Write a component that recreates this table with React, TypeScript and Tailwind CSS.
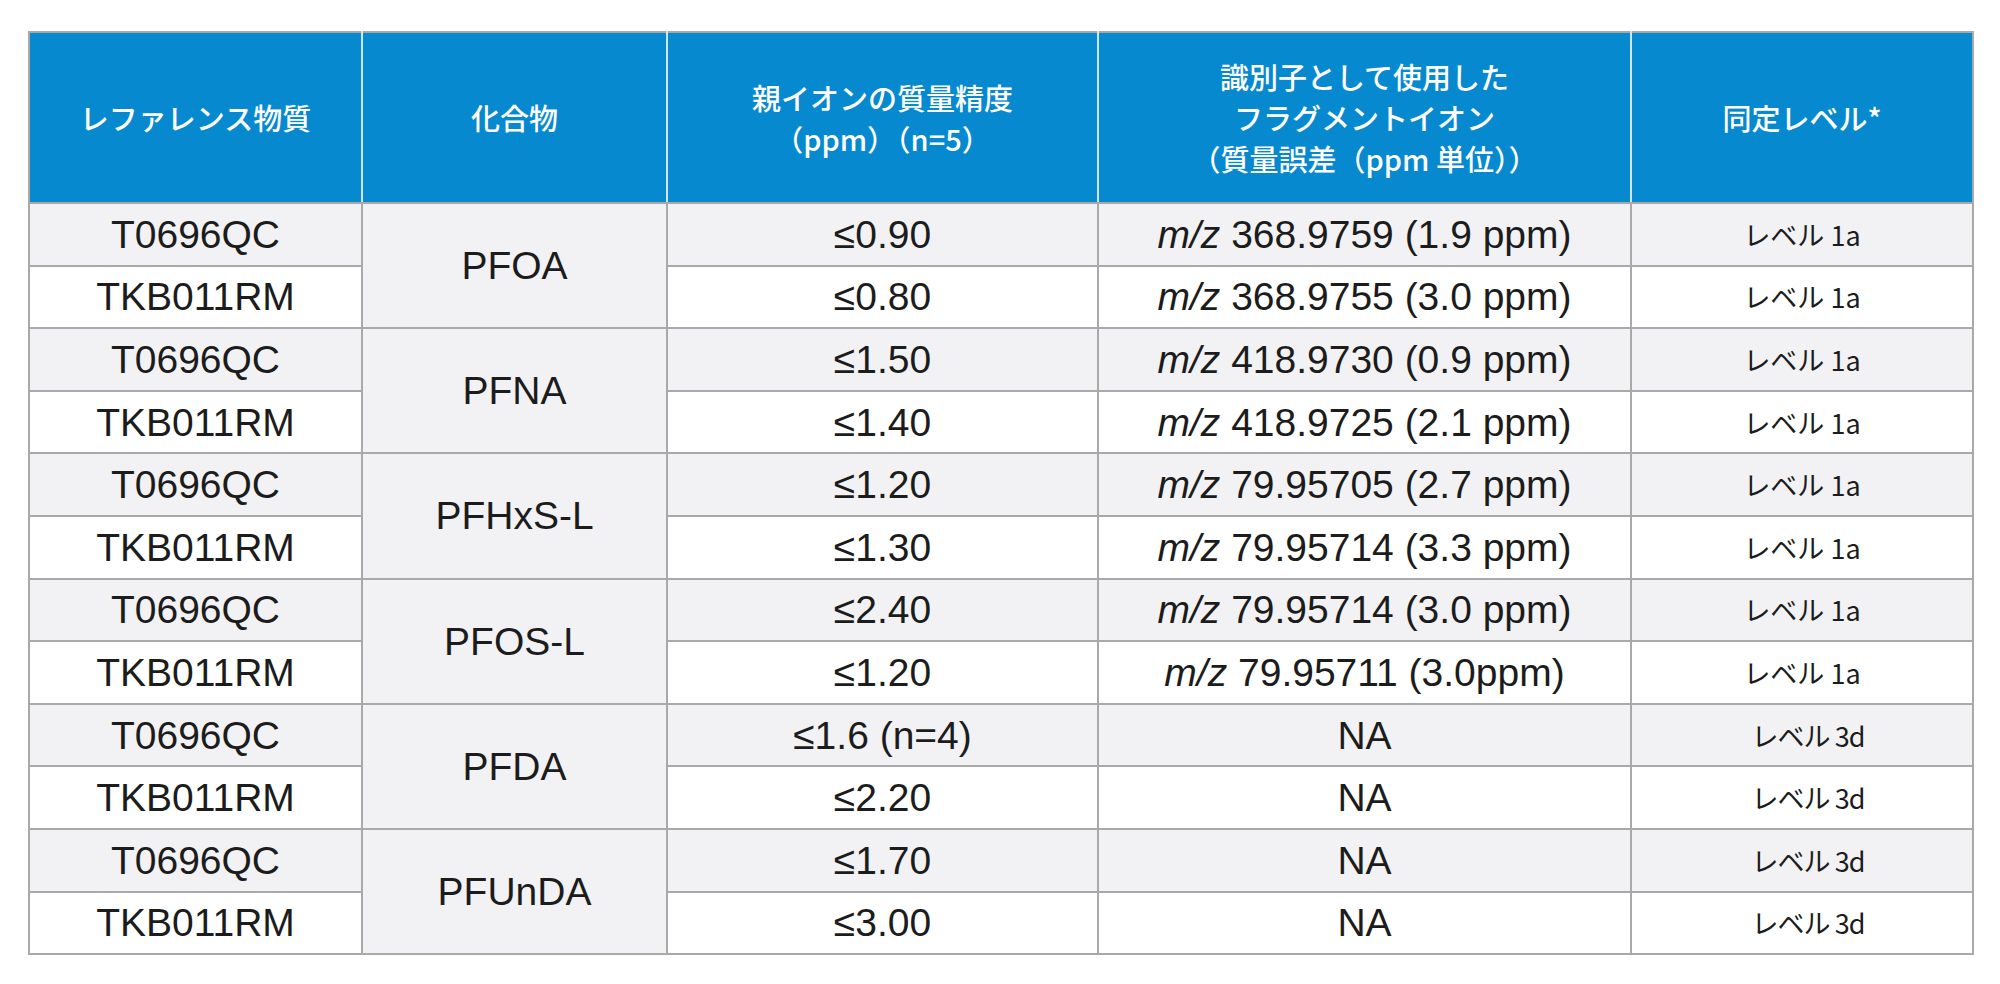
const rows = [
  { ref: 'T0696QC', compound: 'PFOA', acc: '≤0.90', mz: '368.9759 (1.9 ppm)', level: '1a' },
  { ref: 'TKB011RM', compound: 'PFOA', acc: '≤0.80', mz: '368.9755 (3.0 ppm)', level: '1a' },
  { ref: 'T0696QC', compound: 'PFNA', acc: '≤1.50', mz: '418.9730 (0.9 ppm)', level: '1a' },
  { ref: 'TKB011RM', compound: 'PFNA', acc: '≤1.40', mz: '418.9725 (2.1 ppm)', level: '1a' },
  { ref: 'T0696QC', compound: 'PFHxS-L', acc: '≤1.20', mz: '79.95705 (2.7 ppm)', level: '1a' },
  { ref: 'TKB011RM', compound: 'PFHxS-L', acc: '≤1.30', mz: '79.95714 (3.3 ppm)', level: '1a' },
  { ref: 'T0696QC', compound: 'PFOS-L', acc: '≤2.40', mz: '79.95714 (3.0 ppm)', level: '1a' },
  { ref: 'TKB011RM', compound: 'PFOS-L', acc: '≤1.20', mz: '79.95711 (3.0ppm)', level: '1a' },
  { ref: 'T0696QC', compound: 'PFDA', acc: '≤1.6 (n=4)', mz: null, level: '3d' },
  { ref: 'TKB011RM', compound: 'PFDA', acc: '≤2.20', mz: null, level: '3d' },
  { ref: 'T0696QC', compound: 'PFUnDA', acc: '≤1.70', mz: null, level: '3d' },
  { ref: 'TKB011RM', compound: 'PFUnDA', acc: '≤3.00', mz: null, level: '3d' },
];

const sans = "font-['Liberation_Sans','Noto_Sans_CJK_JP',sans-serif]";
const jp = "font-['Noto_Sans_CJK_JP',sans-serif]";

export default function App() {
  return (
    <div className="w-[2000px] h-[984px] bg-white pt-[31px] pl-[28px]">
      <table className="w-[1944px] table-fixed border-collapse text-[#1c1c1c]">
        <colgroup>
          <col className="w-[333px]" />
          <col className="w-[305px]" />
          <col className="w-[431px]" />
          <col className="w-[533px]" />
          <col className="w-[342px]" />
        </colgroup>
        <thead>
          {/* Blue header band */}
          <tr className="h-[171px] bg-[#0689cf] text-white">
            {[
              ['レファレンス物質'],
              ['化合物'],
              ['親イオンの質量精度', '（ppm）（n=5）'],
              ['識別子として使用した', 'フラグメントイオン', '（質量誤差（ppm 単位））'],
              ['同定レベル*'],
            ].map((lines, i) => (
              <th
                key={i}
                className={`border-2 border-[#cfe5f3] border-t-[#a9a9a9] border-b-[#a9a9a9] ${
                  i === 0 ? 'border-l-[#a9a9a9]' : ''
                } ${i === 4 ? 'border-r-[#a9a9a9]' : ''} ${jp} text-[29px] font-medium leading-[41px] text-center align-middle`}
              >
                {lines.map((l) => (
                  <div key={l}>{l}</div>
                ))}
              </th>
            ))}
          </tr>
        </thead>
        <tbody>
          {rows.map((r, i) => {
            const shade = i % 2 === 0 ? 'bg-[#f2f2f4]' : 'bg-white';
            const cell = `border-2 border-[#a9a9a9] text-center align-middle ${shade}`;
            return (
              <tr key={i} className="h-[62.6px]">
                <td className={`${cell} ${sans} text-[39px] leading-none`}>{r.ref}</td>
                {i % 2 === 0 && (
                  <td
                    rowSpan={2}
                    className={`border-2 border-[#a9a9a9] bg-[#f2f2f4] text-center align-middle ${sans} text-[39px] leading-none`}
                  >
                    {r.compound}
                  </td>
                )}
                <td className={`${cell} ${sans} text-[39px] leading-none`}>{r.acc}</td>
                <td className={`${cell} ${sans} text-[39px] leading-none`}>
                  {r.mz ? (
                    <>
                      <i>m/z</i> {r.mz}
                    </>
                  ) : (
                    'NA'
                  )}
                </td>
                <td className={`${cell} ${jp} text-[27px] leading-none`}>
                  <span className={r.level === '3d' ? 'pl-[12px] tracking-[-1px]' : ''}>
                    レベル {r.level}
                  </span>
                </td>
              </tr>
            );
          })}
        </tbody>
      </table>
    </div>
  );
}
